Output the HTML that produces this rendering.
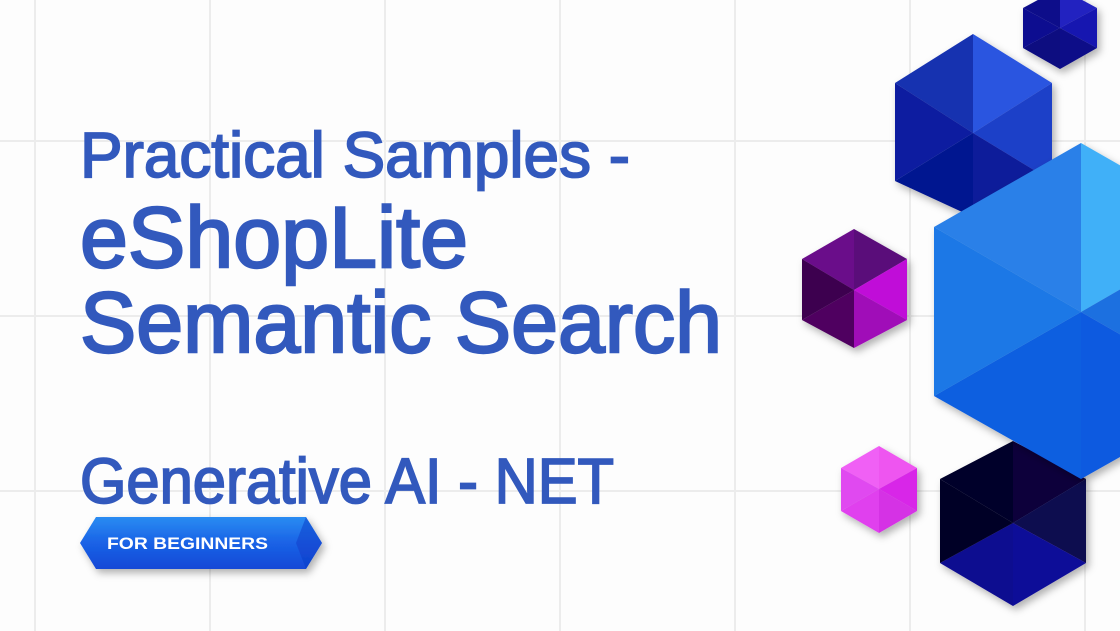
<!DOCTYPE html>
<html><head><meta charset="utf-8"><style>
html,body{margin:0;padding:0;background:#fdfdfd;}
svg{display:block;}
</style></head><body>
<svg width="1120" height="631" viewBox="0 0 1120 631" xmlns="http://www.w3.org/2000/svg">
<defs>
<filter id="sh" x="-20%" y="-20%" width="150%" height="150%"><feDropShadow dx="3" dy="4" stdDeviation="4" flood-color="#000" flood-opacity="0.3"/></filter>
<linearGradient id="bg" x1="0" y1="0" x2="0" y2="1"><stop offset="0" stop-color="#2a8cf2"/><stop offset="0.5" stop-color="#1a62e6"/><stop offset="1" stop-color="#1548d6"/></linearGradient>
</defs>
<rect width="1120" height="631" fill="#fdfdfd"/>
<g stroke="#ececec" stroke-width="2">
<line x1="35" y1="0" x2="35" y2="631"/><line x1="210" y1="0" x2="210" y2="631"/><line x1="385" y1="0" x2="385" y2="631"/><line x1="560" y1="0" x2="560" y2="631"/><line x1="735" y1="0" x2="735" y2="631"/><line x1="910" y1="0" x2="910" y2="631"/><line x1="1085" y1="0" x2="1085" y2="631"/>
<line x1="0" y1="141" x2="1120" y2="141"/><line x1="0" y1="316" x2="1120" y2="316"/><line x1="0" y1="491" x2="1120" y2="491"/>
</g>
<g filter="url(#sh)">
<polygon points="1060,28 1023,8 1060,-12" fill="#10108a"/>
<polygon points="1060,28 1060,-12 1097,8" fill="#2020c0"/>
<polygon points="1060,28 1097,8 1097,48" fill="#1818b0"/>
<polygon points="1060,28 1097,48 1060,69" fill="#0a0a88"/>
<polygon points="1060,28 1060,69 1023,48" fill="#080880"/>
<polygon points="1060,28 1023,48 1023,8" fill="#0c0c90"/>
</g>
<g filter="url(#sh)">
<polygon points="973,133 895,83 973,34" fill="#1530b0"/>
<polygon points="973,133 973,34 1052,83" fill="#2a55e0"/>
<polygon points="973,133 1052,83 1052,181" fill="#1e40c8"/>
<polygon points="973,133 1052,181 973,217" fill="#0a1a9a"/>
<polygon points="973,133 973,217 895,181" fill="#061490"/>
<polygon points="973,133 895,181 895,83" fill="#0a1ea0"/>
</g>
<g filter="url(#sh)">
<polygon points="1013,523 940,479 1013,441" fill="#02022a"/>
<polygon points="1013,523 1013,441 1086,479" fill="#08063a"/>
<polygon points="1013,523 1086,479 1086,563" fill="#0a0850"/>
<polygon points="1013,523 1086,563 1013,606" fill="#100a98"/>
<polygon points="1013,523 1013,606 940,563" fill="#0c0890"/>
<polygon points="1013,523 940,563 940,479" fill="#000028"/>
</g>
<g filter="url(#sh)">
<polygon points="1081,312 934,227 1081,143" fill="#2a80e8"/>
<polygon points="1081,312 1081,143 1228,227" fill="#40b0f8"/>
<polygon points="1081,312 1228,227 1228,396" fill="#1e70e0"/>
<polygon points="1081,312 1228,396 1081,479" fill="#0a5ae0"/>
<polygon points="1081,312 1081,479 934,396" fill="#0f5fe0"/>
<polygon points="1081,312 934,396 934,227" fill="#1a78e6"/>
</g>
<g filter="url(#sh)">
<polygon points="854,290 802,259 854,229" fill="#6a0a8a"/>
<polygon points="854,290 854,229 907,259" fill="#5a0a7a"/>
<polygon points="854,290 907,259 907,320" fill="#c010d8"/>
<polygon points="854,290 907,320 854,348" fill="#a008b8"/>
<polygon points="854,290 854,348 802,320" fill="#500060"/>
<polygon points="854,290 802,320 802,259" fill="#3e0050"/>
</g>
<g filter="url(#sh)">
<polygon points="879,489 841,468 879,446" fill="#f060f5"/>
<polygon points="879,489 879,446 917,468" fill="#ee55f0"/>
<polygon points="879,489 917,468 917,511" fill="#d828e8"/>
<polygon points="879,489 917,511 879,533" fill="#d530e5"/>
<polygon points="879,489 879,533 841,511" fill="#e040ee"/>
<polygon points="879,489 841,511 841,468" fill="#e048f0"/>
</g>
<g fill="#3259bd" stroke="#3259bd" font-family="Liberation Sans, sans-serif">
<text x="80" y="177" font-size="64" stroke-width="1.8" textLength="550" lengthAdjust="spacingAndGlyphs">Practical Samples -</text>
<text x="80" y="267" font-size="86" stroke-width="2.4" textLength="388" lengthAdjust="spacingAndGlyphs">eShopLite</text>
<text x="80" y="352" font-size="86" stroke-width="2.4" textLength="642" lengthAdjust="spacingAndGlyphs">Semantic Search</text>
<text x="80" y="503" font-size="64" stroke-width="1.8" textLength="534" lengthAdjust="spacingAndGlyphs">Generative AI - NET</text>
</g>
<g filter="url(#sh)">
<polygon points="80,543 96,517 306,517 322,543 306,569 96,569" fill="url(#bg)"/>
<polygon points="306,517 322,543 306,569 296,543" fill="#0c3cc8" opacity="0.5"/>
</g>
<text x="107" y="549" font-family="Liberation Sans, sans-serif" font-weight="bold" font-size="17" fill="#fff" textLength="161" lengthAdjust="spacingAndGlyphs">FOR BEGINNERS</text>
</svg>
</body></html>
